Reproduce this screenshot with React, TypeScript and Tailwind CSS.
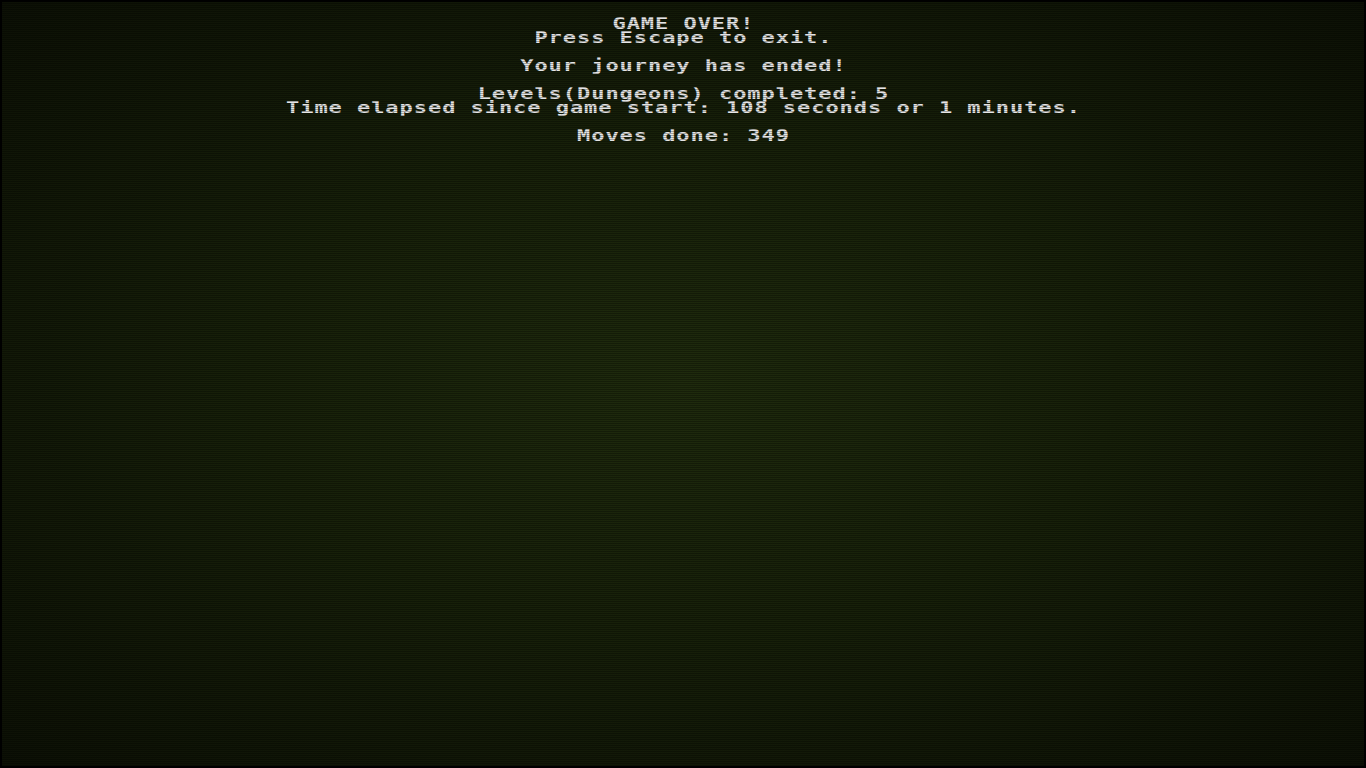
import React from "react";

const lines: string[] = [
  "GAME OVER!",
  "Press Escape to exit.",
  "",
  "Your journey has ended!",
  "",
  "Levels(Dungeons) completed: 5",
  "Time elapsed since game start: 108 seconds or 1 minutes.",
  "",
  "Moves done: 349",
];

export default function App() {
  return (
    <div className="relative h-[768px] w-[1366px] overflow-hidden border-2 border-black bg-[radial-gradient(ellipse_at_center,#1f2b0d_0%,#172009_45%,#0c1005_100%)]">
      <div className="flex origin-top scale-y-75 flex-col items-center pt-[20px] font-['DejaVu_Sans_Mono',monospace] text-[22px] font-bold leading-[18.667px] tracking-[0.95px] text-[#e6e6e6]">
        {lines.map((l, i) => (
          <div key={i} className="h-[18.667px] whitespace-pre pl-[0.95px]">
            {l}
          </div>
        ))}
      </div>
      <div className="pointer-events-none absolute inset-0 bg-[repeating-linear-gradient(to_bottom,rgba(0,0,0,0)_0px,rgba(0,0,0,0)_1px,rgba(0,0,0,0.3)_1px,rgba(0,0,0,0.3)_2px)]" />
    </div>
  );
}
